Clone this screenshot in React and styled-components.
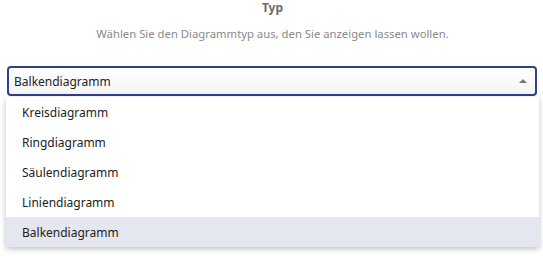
import React, { useState } from 'react';
import styled, { createGlobalStyle } from 'styled-components';

const GlobalStyle = createGlobalStyle`
	body {
		margin: 0;
		background: #fff;
		font-family: 'Noto Sans', 'Open Sans', sans-serif;
	}
`;

const Container = styled.div`
	width: 543px;
	height: 261px;
	padding: 0 4px 0 6px;
	box-sizing: border-box;
	overflow: hidden;
`;

const Title = styled.div`
	font-size: 12px;
	font-weight: 700;
	color: #6b6b6b;
	text-align: center;
	line-height: 16px;
`;

const Subtitle = styled.div`
	font-size: 11.3px;
	color: #8a8a8a;
	text-align: center;
	line-height: 16px;
	margin-top: 10px;
`;

const SelectWrap = styled.div`
	margin-top: 24px;
`;

const SelectBox = styled.div`
	margin: 0 2px 0 1px;
	height: 30px;
	box-sizing: border-box;
	border: 2px solid #2e4190;
	border-radius: 4px;
	background: linear-gradient(#ffffff, #f5f5f5);
	display: flex;
	align-items: center;
	justify-content: space-between;
	padding: 0 8px 0 5px;
	font-size: 12px;
	color: #222;
`;

const Arrow = styled.span`
	width: 0;
	height: 0;
	border-left: 4px solid transparent;
	border-right: 4px solid transparent;
	border-bottom: 4px solid #777;
`;

const Menu = styled.ul`
	list-style: none;
	margin: 1px 0 0 0;
	padding: 0;
	background: #fff;
	box-shadow: 0 2px 6px rgba(0, 0, 0, 0.25);
`;

const Option = styled.li`
	height: 30px;
	display: flex;
	align-items: center;
	padding-left: 16px;
	font-size: 12px;
	color: #222;
	background: ${(props) => (props.selected ? '#e4e7f0' : '#fff')};
`;

const options = ['Kreisdiagramm', 'Ringdiagramm', 'Säulendiagramm', 'Liniendiagramm', 'Balkendiagramm'];

const App = () => {
	const [value, setValue] = useState('Balkendiagramm');

	return (
		<Container>
			<GlobalStyle />
			<Title>Typ</Title>
			<Subtitle>Wählen Sie den Diagrammtyp aus, den Sie anzeigen lassen wollen.</Subtitle>
			<SelectWrap>
				<SelectBox>
					{value}
					<Arrow />
				</SelectBox>
				<Menu>
					{options.map((o) => (
						<Option key={o} selected={o === value} onClick={() => setValue(o)}>
							{o}
						</Option>
					))}
				</Menu>
			</SelectWrap>
		</Container>
	);
};

export default App;
